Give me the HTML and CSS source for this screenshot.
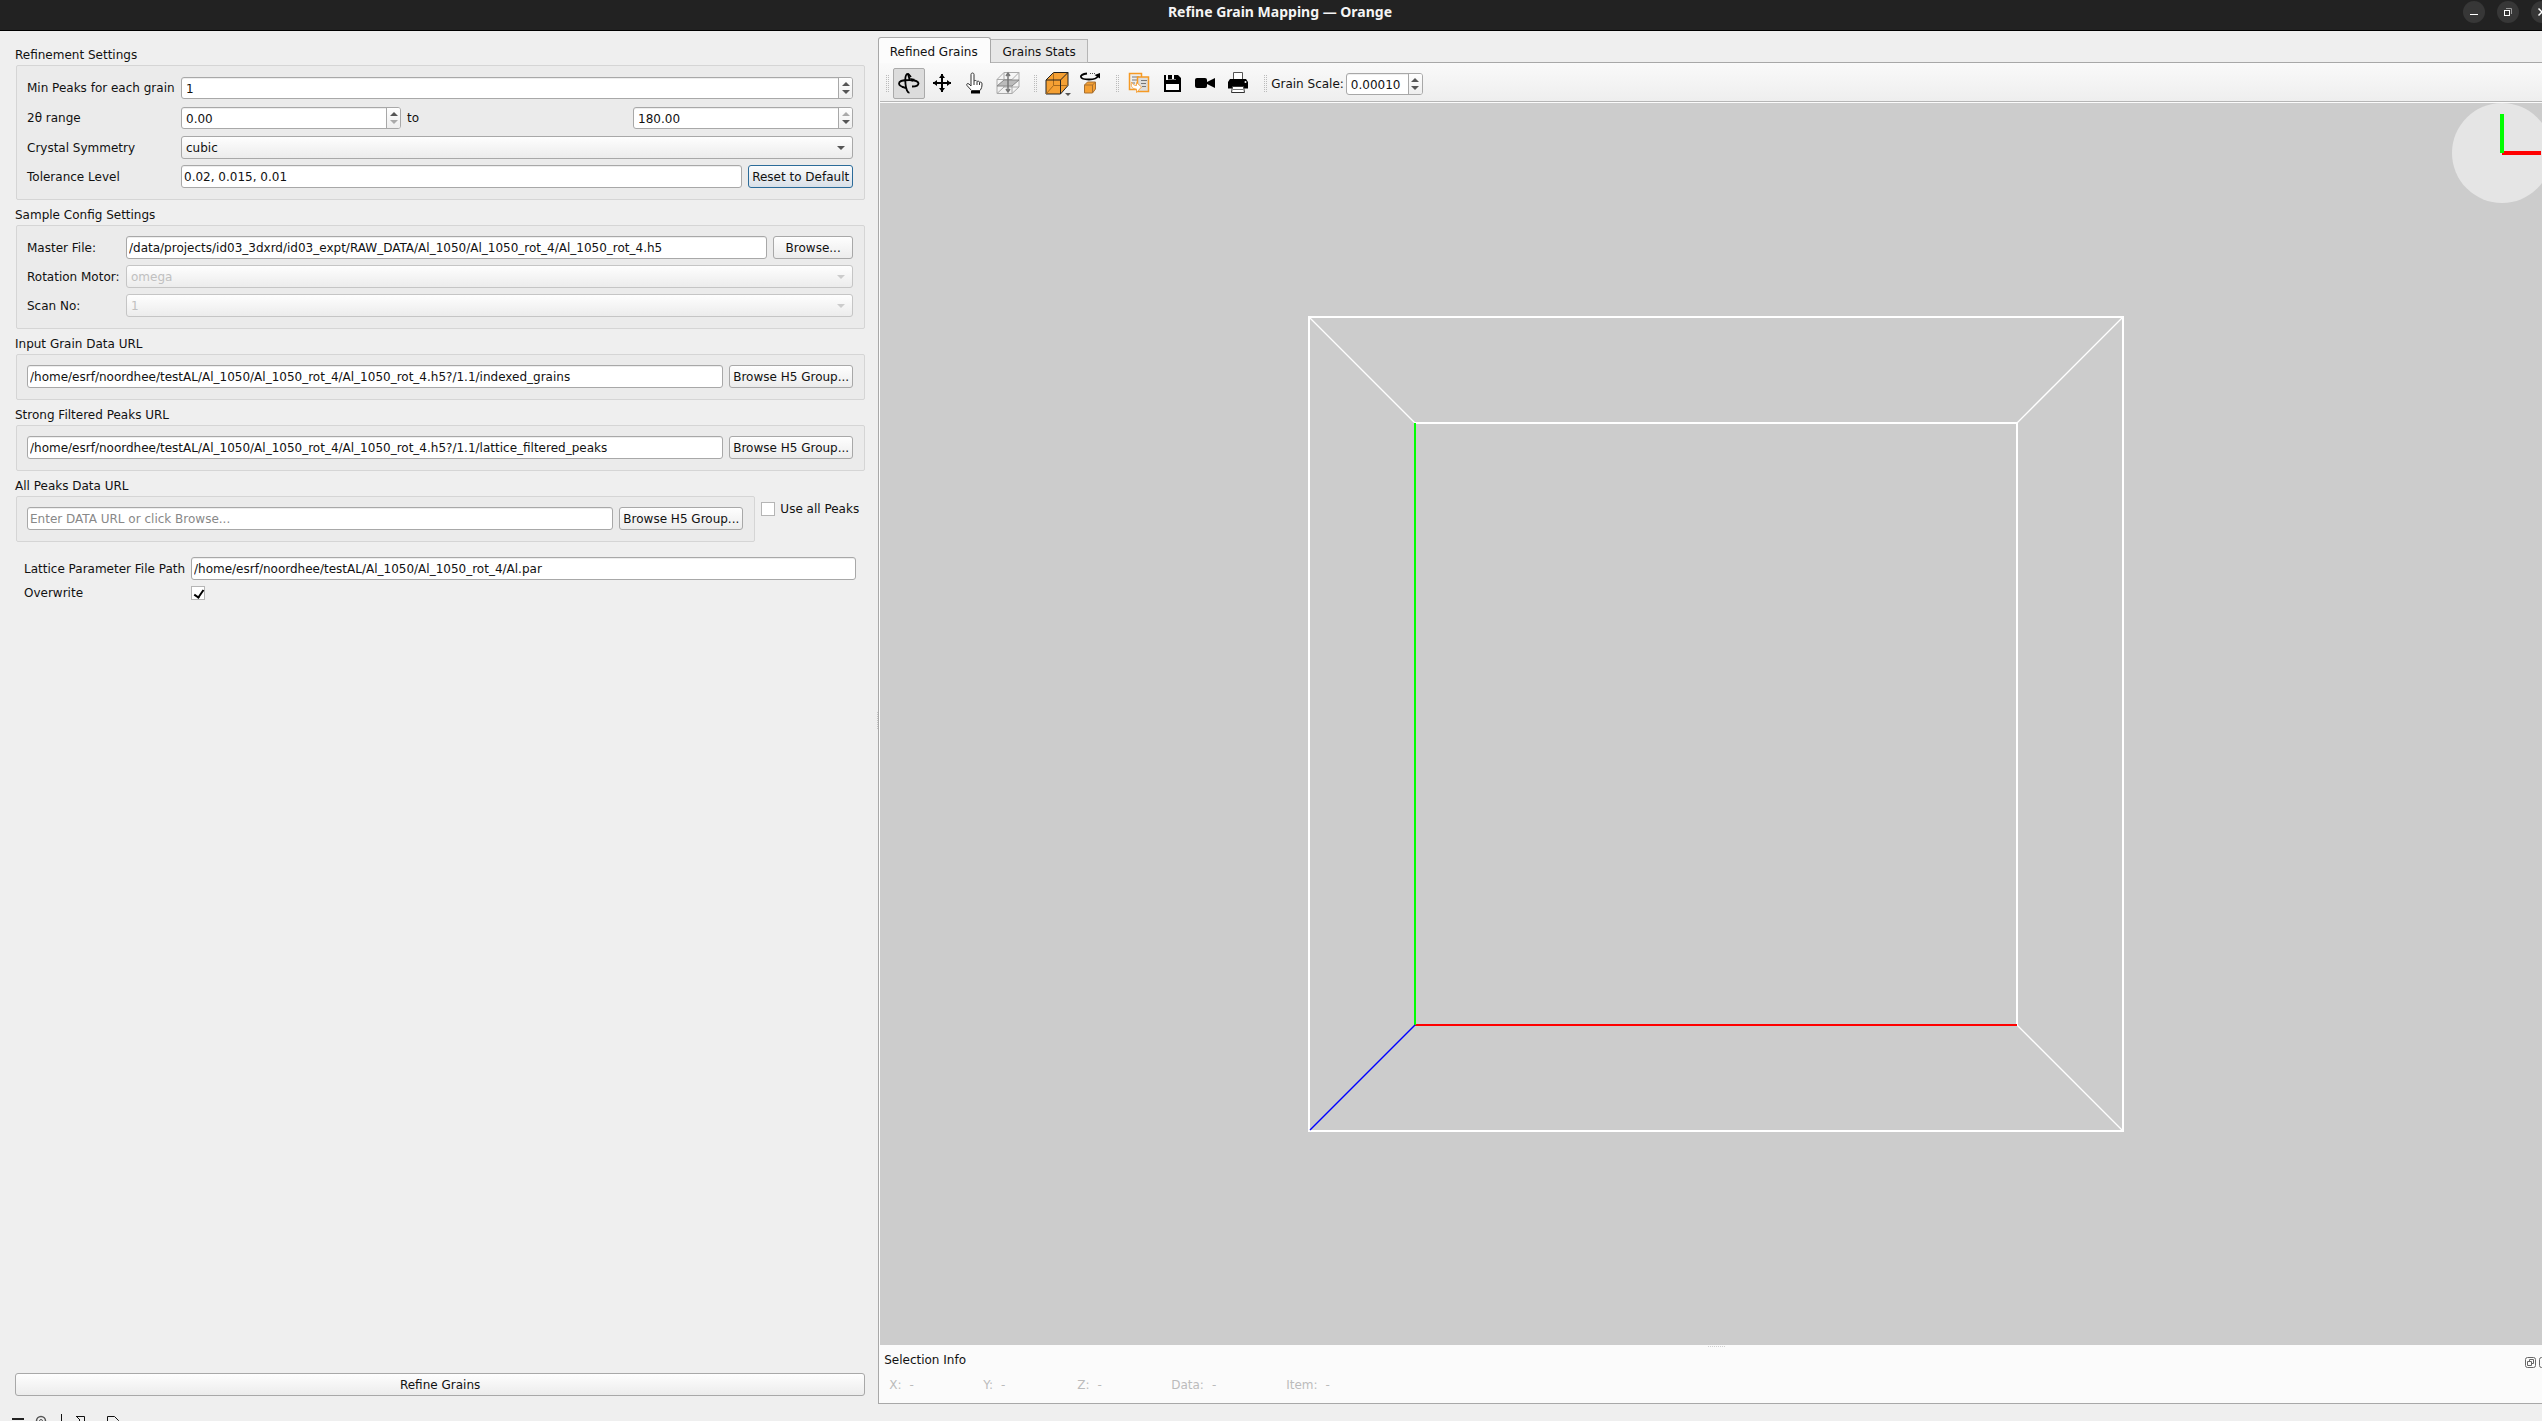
FILE: index.html
```
<!DOCTYPE html>
<html lang="en">
<head>
<meta charset="utf-8">
<title>Refine Grain Mapping — Orange</title>
<link rel="stylesheet" href="styles.css">
</head>
<body>
<div class="window">
  <header class="titlebar">
    <h1 class="title">Refine Grain Mapping — Orange</h1>
    <div class="window-buttons">
      <button class="round" aria-label="Minimize"><svg width="22" height="22"><path d="M7 13.5h8" stroke="#fff" /></svg></button>
      <button class="round" aria-label="Restore"><svg width="22" height="22" fill="none"><path d="M9 7.500h5.500V13" stroke="#999"/><rect x="7.500" y="9.500" width="5" height="5" stroke="#fff"/></svg></button>
      <button class="round" aria-label="Close"><svg width="22" height="22"><path d="M7.500 7.500l7 7m0-7l-7 7" stroke="#fff" stroke-width="1.500"/></svg></button>
    </div>
  </header>
  <main class="main">
    <section class="controls">
      <form class="form">
        <h2 class="heading">Refinement Settings</h2>
        <div class="box refine">
          <label for="minpeaks">Min Peaks for each grain</label>
          <div class="spin"><input id="minpeaks" value="1"><span class="steps"><i class="up"></i><i class="down"></i></span></div>
          <label for="lo">2θ range</label>
          <div class="range">
            <div class="spin"><input id="lo" value="0.00"><span class="steps"><i class="up"></i><i class="down dim"></i></span></div>
            <label for="hi">to</label>
            <div class="spin"><input id="hi" value="180.00"><span class="steps"><i class="up dim"></i><i class="down"></i></span></div>
          </div>
          <label for="sym">Crystal Symmetry</label>
          <div class="combo"><select id="sym"><option>cubic</option></select></div>
          <label for="tol">Tolerance Level</label>
          <div class="line"><input class="field" id="tol" value="0.02, 0.015, 0.01"><button type="button" class="btn focus reset">Reset to Default</button></div>
        </div>
        <h2 class="heading">Sample Config Settings</h2>
        <div class="box sample">
          <label for="master">Master File:</label>
          <div class="line"><input class="field" id="master" value="/data/projects/id03_3dxrd/id03_expt/RAW_DATA/Al_1050/Al_1050_rot_4/Al_1050_rot_4.h5"><button type="button" class="btn browse">Browse...</button></div>
          <label for="motor">Rotation Motor:</label>
          <div class="combo off"><select id="motor" disabled><option>omega</option></select></div>
          <label for="scan">Scan No:</label>
          <div class="combo off"><select id="scan" disabled><option>1</option></select></div>
        </div>
        <h2 class="heading"><label for="grains">Input Grain Data URL</label></h2>
        <div class="box line"><input class="field" id="grains" value="/home/esrf/noordhee/testAL/Al_1050/Al_1050_rot_4/Al_1050_rot_4.h5?/1.1/indexed_grains"><button type="button" class="btn group">Browse H5 Group...</button></div>
        <h2 class="heading"><label for="strong">Strong Filtered Peaks URL</label></h2>
        <div class="box line"><input class="field" id="strong" value="/home/esrf/noordhee/testAL/Al_1050/Al_1050_rot_4/Al_1050_rot_4.h5?/1.1/lattice_filtered_peaks"><button type="button" class="btn group">Browse H5 Group...</button></div>
        <h2 class="heading"><label for="all">All Peaks Data URL</label></h2>
        <div class="allpeaks">
          <div class="box line"><input class="field" id="all" placeholder="Enter DATA URL or click Browse..."><button type="button" class="btn group">Browse H5 Group...</button></div>
          <label class="tick"><input type="checkbox">Use all Peaks</label>
        </div>
        <div class="lattice">
          <label for="par">Lattice Parameter File Path</label>
          <input class="field" id="par" value="/home/esrf/noordhee/testAL/Al_1050/Al_1050_rot_4/Al.par">
          <label for="over">Overwrite</label>
          <input type="checkbox" id="over" checked>
        </div>
        <button type="button" class="btn run">Refine Grains</button>
      </form>
    </section>
    <div class="handle"></div>
    <section class="viewer">
      <nav class="tabs">
        <button class="tab current">Refined Grains</button>
        <button class="tab">Grains Stats</button>
      </nav>
      <div class="pane">
        <div class="toolbar">
          <span class="grip"></span>
          <button class="tool pressed" aria-label="Rotate"><svg width="24" height="24" fill="none" stroke="#000" stroke-width="1.800"><path d="M9 17C5 16 2 14.500 2 12.500C2 10 7 9 12 9s9 1 9.500 3.200C21.500 14 19 15.500 15 15.500M12.500 9C12 5 11 2.500 10 3C8.500 4 8 8 8.500 13C9 18 10.500 22 12.500 21.500"/><path d="M11 2.500L14 6M9 17l-4-1" /><path d="M13 7l5 1-3 3z" fill="#000" stroke="none"/></svg></button>
          <button class="tool" aria-label="Pan"><svg width="24" height="24"><path d="M3 12h18M12 3v18" stroke="#000" stroke-width="2"/><path d="M3 12l4-3v6zM21 12l-4-3v6zM12 3l-3 4h6zM12 21l-3-4h6z"/></svg></button>
          <button class="tool" aria-label="Pick"><svg width="24" height="24"><path d="M8.500 19.500L4 14.500C3 13 4.500 12 6 13l2 2V3.500c0-2 3-2 3 0V10c1-1 2.500-.5 3 .5 1-.7 2.300-.2 2.500.8 1.500-.5 2.500 0 2.500 1.700 0 3-.5 4.500-2 6.500z" fill="#fff" stroke="#333"/><path d="M11 10v4m3-3v3m2.500-2.500V14" stroke="#333"/><path d="M8 20h9v2.500H8z"/></svg></button>
          <button class="tool" aria-label="Clip plane"><svg width="26" height="24" fill="none" stroke="#aaa"><path d="M2 8.500L9 1.500h15M2 8.500h15l7-7V16l-7 6.500H2zM17 8.500v14M9 1.500V16H24M9 16l-7 6.500"/><path d="M2 15l7-6h15l-7 6z" fill="#bbb" stroke="#888"/><path d="M13 2v19M11 5l2-3 2 3M11 18l2 3 2-3" stroke="#777" stroke-width="1.500"/></svg></button>
          <span class="grip"></span>
          <button class="tool" aria-label="Viewpoint"><svg width="28" height="26"><path d="M3 9L10.500 1.500H25V14.500L17.500 23H3z" fill="#f5a033" stroke="#222"/><path d="M10.500 1.500V14.500L3 23M10.500 14.500H25" fill="none" stroke="#a86a1c"/><path d="M3 9H17.500L25 1.500M17.500 9v14" fill="none" stroke="#222"/><path d="M22 22h6l-3 3z" fill="#555"/></svg></button>
          <button class="tool" aria-label="Spin"><svg width="24" height="24"><path d="M9 2.500C0 3.500 1 8.500 11 8.500c5 0 8-1 9-3.500" fill="none" stroke="#000" stroke-width="1.800"/><path d="M12 2.500h5" stroke="#555" stroke-dasharray="1 1"/><path d="M16.500 4l5.500-2v5.500z"/><path d="M6.500 14l3-3h8v7l-3 4h-8z" fill="#f5a033" stroke="#a87030"/><path d="M6.500 14h8l3-3m-3 3v8" fill="none" stroke="#a87030"/></svg></button>
          <span class="grip"></span>
          <button class="tool" aria-label="Copy"><svg width="24" height="24"><path d="M2.500 2.500h12v16h-12z" fill="#eee" stroke="#f59a25" stroke-width="1.500"/><path d="M5 6h7M5 9h5M5 12h3" stroke="#777"/><path d="M10.500 6h11v14.500h-11z" fill="#ddd" stroke="#f59a25" stroke-width="1.500"/><path d="M14 9.500h6M14 12.500h5M15 15.500h4" stroke="#777"/><path d="M4.500 11c-1 5 1 7 5 7v3.500l5-5.500-5-4.500v3c-2 0-4-1-5-3.500z" fill="#fff" stroke="#f5a84a"/></svg></button>
          <button class="tool" aria-label="Save"><svg width="24" height="24"><path d="M4 4h14l3 3v14H4z"/><path d="M6 4h10v5H6z" fill="#f6f6f6"/><path d="M8 4h8v4.500H8z"/><path d="M12 4h2v4h-2zM6 13h13v6H6z" fill="#fff"/></svg></button>
          <button class="tool" aria-label="Record video"><svg width="24" height="24"><rect x="2" y="7" width="12" height="10" rx="2"/><path d="M14 11l8-4v10l-8-4z"/></svg></button>
          <button class="tool" aria-label="Print"><svg width="24" height="24"><path d="M7.500 9V1.500h9V9" fill="#fff" stroke="#555"/><path d="M4 8h16l2 3v6.500H2v-6.500z"/><path d="M6.500 15.500h11l1 6h-13z" fill="#fff" stroke="#333"/><path d="M7 18.500h10" stroke="#777"/><circle cx="19.500" cy="11" r="1" fill="#fff"/></svg></button>
          <span class="grip"></span>
          <label for="scale">Grain Scale:</label>
          <div class="spin scale"><input id="scale" value="0.00010"><span class="steps"><i class="up"></i><i class="down"></i></span></div>
        </div>
        <div class="scene">
          <svg class="cube" viewBox="0 0 816 816" fill="none" stroke="#fff" stroke-width="2">
            <path d="M1 1L107 107M815 1L709 107M815 815L709 709" stroke-width="1.300"/>
            <g shape-rendering="crispEdges"><path d="M1 1H815V815H1zM107 107H709V709"/><path d="M107 709H709" stroke="#f00"/><path d="M107 107V709" stroke="#0f0"/></g>
            <path d="M2 814L107 709" stroke="#00f" stroke-width="1.400"/>
          </svg>
          <svg class="axes" width="100" height="100"><circle cx="50" cy="50" r="50" fill="#e5e5e5"/><path d="M50 50H89" stroke="#f00" stroke-width="4"/><path d="M50 50V11" stroke="#0f0" stroke-width="4"/></svg>
        </div>
        <div class="info">
          <div class="info-head"><h2 class="heading">Selection Info</h2>
            <div class="dock">
              <button aria-label="Float"><svg width="11" height="11" fill="none" stroke="#666"><rect x=".5" y=".5" width="10" height="10" rx="2"/><path d="M4.500 4V2.500h4v4H7M2.500 4.500h4v4h-4z"/></svg></button>
              <button aria-label="Close"><svg width="11" height="11" fill="none" stroke="#666"><rect x=".5" y=".5" width="10" height="10" rx="2"/><path d="M3 3l5 5m0-5L3 8"/></svg></button>
            </div>
          </div>
          <dl class="values">
            <div><dt>X:</dt><dd>-</dd></div><div><dt>Y:</dt><dd>-</dd></div><div><dt>Z:</dt><dd>-</dd></div><div class="data"><dt>Data:</dt><dd>-</dd></div><div><dt>Item:</dt><dd>-</dd></div>
          </dl>
        </div>
      </div>
    </section>
  </main>
  <footer class="status">
    <svg width="130" height="24" fill="none" stroke="#222"><path d="M12 8h12M12 13h12" stroke-width="2"/><circle cx="41" cy="10" r="4.500" stroke="#555" stroke-width="1.500"/><circle cx="41" cy="10" r="1.500" stroke="#555"/><path d="M61.500 3v20M76 5.500h8.500V16M76 5l4 4-4 4M107.500 17V5.500h7l4 4V17" stroke="#111"/></svg>
  </footer>
</div>
</body>
</html>
```
FILE: styles.css
```
* { box-sizing: border-box; }
body { margin: 0; font: 12px/16px "DejaVu Sans", sans-serif; color: #111; background: #efefef; }
button, input, select { font: inherit; color: inherit; margin: 0; }
button { padding: 0; border: 0; background: none; }
h1, h2, dl, dd { margin: 0; font: inherit; }
svg { display: block; flex: none; }
label { white-space: nowrap; }
.window { height: 100vh; display: flex; flex-direction: column; overflow: hidden; }
.titlebar { height: 31px; flex: none; position: relative; background: #222; border-bottom: 1px solid #000; }
.title { text-align: center; color: #f5f5f5; font: bold 14px/23px "Noto Sans", sans-serif; margin-right: -18px; }
.window-buttons { position: absolute; top: 1px; right: -11px; display: flex; gap: 12px; }
.round { width: 22px; height: 22px; border-radius: 50%; background: #373737; }
.main { flex: 1; display: grid; grid-template-columns: 52fr 13px 100fr; grid-template-rows: minmax(0, 1fr); min-height: 0; }
.controls { padding: 15px 0 15px 15px; display: flex; min-width: 0; }
.form { flex: 1; display: flex; flex-direction: column; min-width: 0; }
.heading { line-height: 18px; padding-bottom: 1px; }
.box { background: #ebebeb; border: 1px solid #d5d5d5; border-radius: 2px; padding: 10px 11px 11px 10px; margin: 0 0 6px 1px; }
.line { display: flex; gap: 6px; }
.refine { display: grid; grid-template-columns: 148px 1fr; row-gap: 6px; column-gap: 6px; align-items: center; padding-top: 11px; }
.sample { display: grid; grid-template-columns: 93px 1fr; gap: 6px; align-items: center; }
.field, .combo select, .btn { height: 23px; border: 1px solid #a8a8a8; border-radius: 3px; min-width: 0; }
.field { flex: 1; width: 100%; background: #fff; padding: 1px 2px 0; box-shadow: inset 0 1px #eee; }
.field::placeholder { color: #888; opacity: 1; }
.btn { background: linear-gradient(#fefefe, #ececec); text-align: center; flex: none; }
.focus { border-color: #2b6b99; background: linear-gradient(#fbfcfd, #d9e0e8); }
.reset { width: 105px; }
.browse { width: 80px; }
.group { width: 124px; }
.combo { position: relative; }
.combo select { display: block; width: 100%; appearance: none; background: linear-gradient(#fefefe, #ececec); padding: 0 4px; opacity: 1; }
.combo::after { content: ""; position: absolute; right: 8px; top: 10px; border: 4px solid transparent; border-top-color: #555; border-bottom: 0; }
.off select { color: #c0c0c0; }
.combo.off select { border-color: #c5c5c5; }
.off::after { border-top-color: #ccc; }
.spin { height: 22px; display: flex; border: 1px solid #a8a8a8; border-radius: 3px; background: #fff; overflow: hidden; box-shadow: inset 0 1px #eee; min-width: 0; }
.spin input { flex: 1; min-width: 0; border: 0; background: none; padding: 2px 4px 0; outline: 0; }
.steps { width: 14px; border-left: 1px solid #a8a8a8; background: linear-gradient(#fefefe, #eee); display: flex; flex-direction: column; align-items: center; justify-content: center; gap: 4px; }
.up, .down { border: 4px solid transparent; }
.up { border-bottom-color: #555; border-top: 0; }
.down { border-top-color: #555; border-bottom: 0; }
.up.dim { border-bottom-color: #aaa; }
.down.dim { border-top-color: #aaa; }
.range { display: grid; grid-template-columns: 1fr 220px 1fr; column-gap: 6px; align-items: center; margin: 2px 0 1px; }
.allpeaks { display: flex; align-items: flex-start; gap: 6px; }
.allpeaks .box { flex: 1; }
.tick { display: flex; gap: 5px; margin: 6px 6px 0 0; line-height: 14px; align-items: center; }
[type=checkbox] { appearance: none; width: 14px; height: 14px; border: 1px solid #b5b5b5; background: #fff; position: relative; }
[type=checkbox]:checked::after { content: ""; position: absolute; left: 4px; top: 1px; width: 4px; height: 8px; border: solid #000; border-width: 0 2px 2px 0; transform: rotate(35deg); }
.lattice { display: grid; grid-template-columns: 161px 1fr; gap: 6px; align-items: center; padding: 9px 9px 0; line-height: 14px; }
.run { margin-top: auto; width: 100%; }
.handle { display: flex; align-items: center; justify-content: flex-end; }
.handle::after { content: ""; width: 2px; height: 18px; background: conic-gradient(#c5c5c5 90deg, transparent 0) 0 0 / 2px 2px; }
.viewer { min-width: 0; display: flex; flex-direction: column; padding: 6px 0 7px; margin-right: -10px; }
.tabs { display: flex; align-items: flex-end; height: 26px; flex: none; margin-bottom: -1px; position: relative; }
.tab { height: 24px; width: 97px; background: #e7e7e7; border: 1px solid #b5b5b5; border-left: 0; padding-top: 2px; }
.tab.current { height: 26px; width: 113px; background: #fcfcfc; border: 1px solid #a8a8a8; border-bottom: 0; border-radius: 3px 3px 0 0; padding-right: 2px; }
.pane { flex: 1; min-height: 0; display: flex; flex-direction: column; border: 1px solid #a8a8a8; border-right: 0; background: #fbfbfb; padding-left: 1px; }
.toolbar { flex: none; height: 39px; display: flex; gap: 1px; align-items: center; background: linear-gradient(#fafafa, #eee); border-bottom: 1px solid #b5b5b5; padding: 5px 0 2px; }
.grip { width: 4px; height: 18px; margin: 0 3px 0 8px; background: conic-gradient(#bbb 90deg, transparent 0) 0 0 / 2px 2px; }
.grip:first-child { margin-left: 5px; }
.tool { width: 32px; height: 31px; display: flex; align-items: flex-start; justify-content: center; border: 1px solid transparent; border-radius: 2px; padding-top: 2px; }
.pressed { background: #dcdcdc; border-color: #aaa; }
.scale { width: 77px; margin-left: 1px; }
.scene { flex: 1; min-height: 0; margin-top: 1px; position: relative; background: #ccc; display: flex; align-items: center; justify-content: center; }
.cube { height: 65.7%; aspect-ratio: 1; }
.axes { position: absolute; right: 0; top: 0; }
.info { flex: none; height: 58px; padding: 6px 0 0 4px; position: relative; }
.info::before { content: ""; position: absolute; left: 50%; top: 1px; width: 18px; height: 2px; margin-left: -9px; background: conic-gradient(#d0d0d0 90deg, transparent 0) 0 0 / 2px 2px; }
.info-head { display: flex; justify-content: space-between; }
.dock { display: flex; gap: 3px; margin: 4px 2px 0 0; }
.values { display: flex; padding: 7px 0 0 5px; color: #bbb; }
.values div { display: flex; gap: 8px; width: 94px; }
.values .data { width: 115px; }
.status { flex: none; height: 10px; overflow: hidden; }
```
